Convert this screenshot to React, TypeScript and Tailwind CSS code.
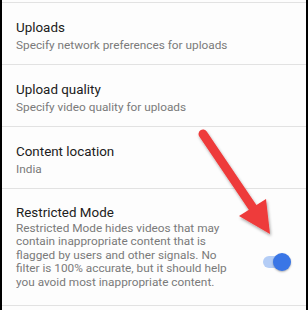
import React from "react";

const rows = [
  { title: "Uploads", sub: "Specify network preferences for uploads" },
  { title: "Upload quality", sub: "Specify video quality for uploads" },
  { title: "Content location", sub: "India" },
];

const Row = ({ title, sub }: { title: string; sub: string }) => (
  <div className="h-[62px] border-b border-[#e2e2e2] pl-[14px] pt-[16px]">
    <div className="text-[13.4px] leading-[17px] text-[#202020]">{title}</div>
    <div className="mt-[1px] text-[11.8px] leading-[16px] text-[#7a7a7a]">{sub}</div>
  </div>
);

export default function App() {
  return (
    <div className="w-[308px] h-[310px] bg-black px-[2px] overflow-hidden" style={{ fontFamily: "Roboto, 'Noto Sans', sans-serif" }}>
      <div className="relative h-full bg-[#fdfdfd]">
        <div className="h-[2px]" />
        <div className="border-t border-[#e2e2e2]">
          {rows.map((r) => (
            <Row key={r.title} title={r.title} sub={r.sub} />
          ))}
          <div className="h-[117px] border-b border-[#e2e2e2] pl-[14px] pr-[15px] pt-[15px] flex">
            <div className="w-[220px]">
              <div className="text-[13.4px] leading-[17px] text-[#202020]">Restricted Mode</div>
              <div className="mt-[1px] text-[11.8px] leading-[13.4px] text-[#7a7a7a]">
                Restricted Mode hides videos that may contain inappropriate content that is flagged by users and other signals. No filter is 100% accurate, but it should help you avoid most inappropriate content.
              </div>
            </div>
            <div className="ml-auto mt-[49px] relative w-[28px] h-[18px]">
              <div className="absolute left-0 top-[3px] w-[24px] h-[12px] rounded-full bg-[#b4cdf6]" />
              <div className="absolute right-0 top-0 w-[18px] h-[18px] rounded-full bg-[#3a76e6] shadow-[0_1px_2px_rgba(0,0,0,0.3)]" />
            </div>
          </div>
        </div>
        <svg className="absolute left-0 top-0 pointer-events-none" width="304" height="310" viewBox="0 0 304 310">
          <defs>
            <filter id="sh" x="-20%" y="-20%" width="140%" height="140%">
              <feDropShadow dx="1" dy="2" stdDeviation="1.5" floodColor="#000" floodOpacity="0.35" />
            </filter>
          </defs>
          <g filter="url(#sh)" fill="#ee3b3b">
            <line x1="201" y1="134" x2="251" y2="208" stroke="#ee3b3b" strokeWidth="9" strokeLinecap="round" />
            <polygon points="268,234 237,216 264,199" />
          </g>
        </svg>
      </div>
    </div>
  );
}
